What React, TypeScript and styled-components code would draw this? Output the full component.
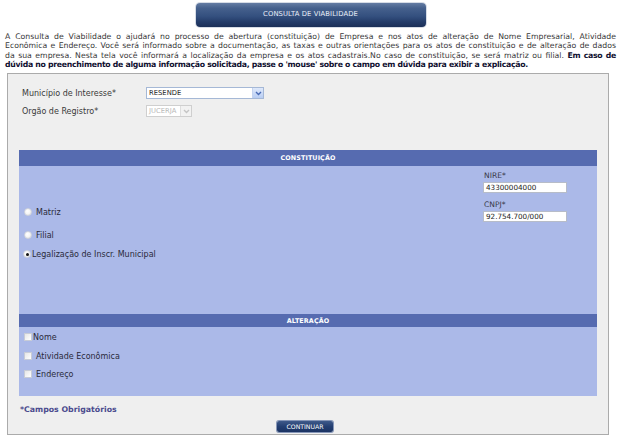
import React from "react";
import styled, { createGlobalStyle } from "styled-components";

const GlobalStyle = createGlobalStyle`
  html, body { margin: 0; padding: 0; background: #ffffff; }
  body { font-family: "DejaVu Sans", Verdana, sans-serif; color: #333; }
  * { box-sizing: border-box; }
`;

const Page = styled.div`
  width: 621px;
  height: 441px;
  padding: 3px 0 0 0;
  display: flex;
  flex-direction: column;
`;

const TitleTab = styled.div`
  align-self: center;
  width: 230px;
  height: 24px;
  border-radius: 4px;
  background: linear-gradient(#647ca3 0%, #45608c 22%, #34507f 55%, #233b68 80%, #1b2f58 100%);
  box-shadow: 0 0 0 1px #d6dce6;
  color: #e8eef8;
  font-size: 6.8px;
  letter-spacing: 0.1px;
  display: flex;
  align-items: center;
  justify-content: center;
  padding-bottom: 2px;
`;

const Intro = styled.div`
  margin: 5px 5px 0 5px;
  font-size: 7.75px;
  line-height: 9.35px;
  color: #383838;
`;

const IntroLine = styled.div<{ $last?: boolean }>`
  white-space: nowrap;
  text-align: ${(p) => (p.$last ? "left" : "justify")};
  text-align-last: ${(p) => (p.$last ? "left" : "justify")};
`;

const Strong = styled.b`
  color: #101030;
  font-weight: bold;
  letter-spacing: -0.28px;
`;

const Panel = styled.div`
  margin: 4px 0 0 7px;
  width: 602px;
  height: 362px;
  border: 1px solid #ababab;
  background: #efefef;
  padding: 13px 11px 0 11px;
  display: flex;
  flex-direction: column;
`;

const FieldRow = styled.div<{ $mt?: number }>`
  display: grid;
  grid-template-columns: 124px auto;
  align-items: center;
  height: 12px;
  margin-top: ${(p) => p.$mt ?? 0}px;
  padding-left: 3px;
`;

const Label = styled.span`
  font-size: 8px;
  color: #3a3a3a;
  white-space: nowrap;
`;

const FakeSelect = styled.div<{ $w: number; $disabled?: boolean }>`
  width: ${(p) => p.$w}px;
  height: 12px;
  background: #fff;
  border: 1px solid ${(p) => (p.$disabled ? "#cfcfcf" : "#a5b8d6")};
  display: flex;
  align-items: center;
  justify-content: space-between;
  font-size: 6.8px;
  color: ${(p) => (p.$disabled ? "#b8b8b8" : "#222")};
  padding-left: 2px;
`;

const ArrowBox = styled.span<{ $disabled?: boolean }>`
  width: 11px;
  height: 10px;
  display: flex;
  align-items: center;
  justify-content: center;
  background: ${(p) => (p.$disabled ? "#f2f2f2" : "linear-gradient(#dfe9fb, #b8cdf3)")};
  border-left: 1px solid ${(p) => (p.$disabled ? "#dedede" : "#c3d3f0")};
`;

const Section = styled.div<{ $mt?: number }>`
  margin-top: ${(p) => p.$mt ?? 0}px;
  display: flex;
  flex-direction: column;
`;

const SectionHeader = styled.div<{ $h: number }>`
  height: ${(p) => p.$h}px;
  background: #566bb0;
  color: #ffffff;
  font-size: 6.4px;
  font-weight: bold;
  display: flex;
  align-items: center;
  justify-content: center;
  letter-spacing: 0.1px;
`;

const SectionBody = styled.div<{ $h: number }>`
  height: ${(p) => p.$h}px;
  background: #abb9e8;
`;

const ConstGrid = styled.div`
  display: grid;
  grid-template-columns: 464px 1fr;
  height: 100%;
`;

const LeftCol = styled.div`
  display: flex;
  flex-direction: column;
  padding-top: 39px;
`;

const RightCol = styled.div`
  display: flex;
  flex-direction: column;
  padding-top: 5px;
`;

const OptionRow = styled.label<{ $mt?: number; $pl?: number }>`
  display: flex;
  align-items: center;
  height: 14px;
  margin-top: ${(p) => p.$mt ?? 0}px;
  padding-left: ${(p) => p.$pl ?? 5}px;
  font-size: 8px;
  color: #2a2a3a;
  white-space: nowrap;
`;

const Radio = styled.span<{ $checked?: boolean; $gap?: number }>`
  width: 8px;
  height: 8px;
  border-radius: 50%;
  background: radial-gradient(circle at 40% 35%, #ffffff 0%, #f4f4f4 55%, #d9d9d9 100%);
  border: 1px solid #cfd3dc;
  margin-right: ${(p) => p.$gap ?? 4}px;
  display: flex;
  align-items: center;
  justify-content: center;
  &::after {
    content: "";
    width: 3px;
    height: 3px;
    border-radius: 50%;
    background: ${(p) => (p.$checked ? "#111" : "transparent")};
  }
`;

const Check = styled.span<{ $gap?: number }>`
  width: 8px;
  height: 8px;
  background: linear-gradient(135deg, #e6e6e6, #ffffff);
  border: 1px solid #c8ccd6;
  margin-right: ${(p) => p.$gap ?? 4}px;
`;

const SmallLabel = styled.span<{ $mt?: number }>`
  font-size: 7.6px;
  line-height: 10px;
  height: 10px;
  color: #3a3a4a;
  margin-top: ${(p) => p.$mt ?? 0}px;
  padding-left: 1px;
`;

const TextBox = styled.div`
  width: 84px;
  height: 11px;
  background: #fff;
  border: 1px solid #b7bcc8;
  font-size: 7.2px;
  color: #222;
  display: flex;
  align-items: center;
  padding-left: 2px;
  margin-top: 1px;
`;

const AltBody = styled.div`
  display: flex;
  flex-direction: column;
  padding-top: 3px;
`;

const Required = styled.div`
  margin-top: 7px;
  padding-left: 1px;
  font-size: 7.8px;
  font-weight: bold;
  color: #4b4b8e;
  height: 12px;
  display: flex;
  align-items: center;
`;

const ButtonRow = styled.div`
  display: flex;
  justify-content: center;
  margin-top: 6px;
  padding-right: 6px;
`;

const Button = styled.button`
  width: 56px;
  height: 11px;
  border: none;
  border-radius: 2px;
  background: linear-gradient(#3f5a8a, #243f72 50%, #1b3363);
  box-shadow: 0 0 0 1px #8797b8;
  color: #fff;
  font-family: "DejaVu Sans", Verdana, sans-serif;
  font-size: 6.2px;
  padding: 0;
  display: flex;
  align-items: center;
  justify-content: center;
`;

const Chevron = ({ color }: { color: string }) => (
  <svg width="7" height="5" viewBox="0 0 7 5">
    <path d="M1 1 L3.5 3.5 L6 1" stroke={color} strokeWidth="1.4" fill="none" />
  </svg>
);

export default function App() {
  return (
    <>
      <GlobalStyle />
      <Page>
        <TitleTab>CONSULTA DE VIABILIDADE</TitleTab>
        <Intro>
          <IntroLine>
            A Consulta de Viabilidade o ajudará no processo de abertura (constituição) de Empresa e nos atos de alteração de Nome Empresarial, Atividade
          </IntroLine>
          <IntroLine>
            Econômica e Endereço. Você será informado sobre a documentação, as taxas e outras orientações para os atos de constituição e de alteração de dados
          </IntroLine>
          <IntroLine>
            da sua empresa. Nesta tela você informará a localização da empresa e os atos cadastrais.No caso de constituição, se será matriz ou filial. <Strong>Em caso de</Strong>
          </IntroLine>
          <IntroLine $last>
            <Strong>dúvida no preenchimento de alguma informação solicitada, passe o 'mouse' sobre o campo em dúvida para exibir a explicação.</Strong>
          </IntroLine>
        </Intro>
        <Panel>
          <FieldRow>
            <Label>Município de Interesse*</Label>
            <FakeSelect $w={118}>
              RESENDE
              <ArrowBox>
                <Chevron color="#4a6bb5" />
              </ArrowBox>
            </FakeSelect>
          </FieldRow>
          <FieldRow $mt={6}>
            <Label>Orgão de Registro*</Label>
            <FakeSelect $w={46} $disabled>
              JUCERJA
              <ArrowBox $disabled>
                <Chevron color="#c4c4c4" />
              </ArrowBox>
            </FakeSelect>
          </FieldRow>

          <Section $mt={33}>
            <SectionHeader $h={16}>CONSTITUIÇÃO</SectionHeader>
            <SectionBody $h={148}>
              <ConstGrid>
                <LeftCol>
                  <OptionRow>
                    <Radio />
                    Matriz
                  </OptionRow>
                  <OptionRow $mt={9}>
                    <Radio />
                    Filial
                  </OptionRow>
                  <OptionRow $mt={5} $pl={4}>
                    <Radio $checked $gap={1} />
                    Legalização de Inscr. Municipal
                  </OptionRow>
                </LeftCol>
                <RightCol>
                  <SmallLabel>NIRE*</SmallLabel>
                  <TextBox>43300004000</TextBox>
                  <SmallLabel $mt={7}>CNPJ*</SmallLabel>
                  <TextBox>92.754.700/000</TextBox>
                </RightCol>
              </ConstGrid>
            </SectionBody>
            <SectionHeader $h={13}>ALTERAÇÃO</SectionHeader>
            <SectionBody $h={69}>
              <AltBody>
                <OptionRow>
                  <Check $gap={1} />
                  Nome
                </OptionRow>
                <OptionRow $mt={5}>
                  <Check />
                  Atividade Econômica
                </OptionRow>
                <OptionRow $mt={4}>
                  <Check />
                  Endereço
                </OptionRow>
              </AltBody>
            </SectionBody>
          </Section>
          <Required>*Campos Obrigatórios</Required>
          <ButtonRow>
            <Button>CONTINUAR</Button>
          </ButtonRow>
        </Panel>
      </Page>
    </>
  );
}
